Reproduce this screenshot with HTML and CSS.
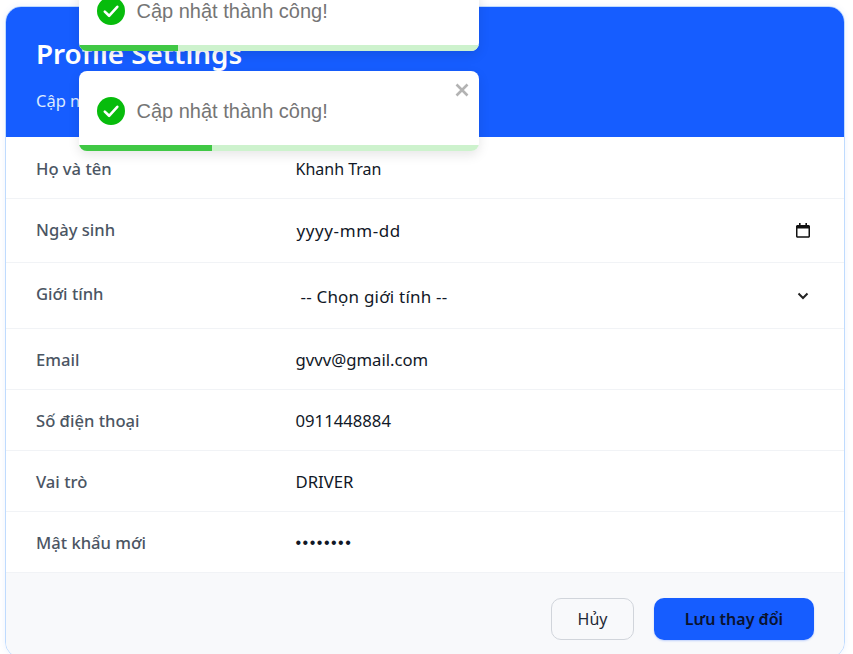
FILE: index.html
```html
<!DOCTYPE html>
<html lang="vi">
<head>
<meta charset="utf-8">
<title>Profile Settings</title>
<link rel="stylesheet" href="styles.css">
</head>
<body>
<main class="card">
  <header class="head">
    <h1>Profile Settings</h1>
    <p>Cập nhật thông tin cá nhân của bạn</p>
  </header>
  <div class="row r62"><span class="label">Họ và tên</span><span class="value v-name">Khanh Tran</span></div>
  <div class="row r64"><span class="label">Ngày sinh</span>
    <span class="value date"><span>yyyy-mm-dd</span>
      <svg class="cal" viewBox="0 0 14 15"><path d="M3 0h1.600v2h4.800V0H11v2h1.500c.8 0 1.500.7 1.500 1.500v9.800c0 .8-.7 1.500-1.500 1.500h-11C.7 14.800 0 14.100 0 13.300V3.500C0 2.700.7 2 1.500 2H3zM1.500 5.500v7.800h11V5.500z" fill="#111"/></svg>
    </span></div>
  <div class="row r66"><span class="label">Giới tính</span>
    <span class="value sel"><span>-- Chọn giới tính --</span>
      <svg class="chev" viewBox="0 0 12 8"><path d="M1.500 1.500L6 6l4.500-4.500" fill="none" stroke="#222" stroke-width="2"/></svg>
    </span></div>
  <div class="row r61"><span class="label">Email</span><span class="value v-wide">gvvv@gmail.com</span></div>
  <div class="row r61"><span class="label">Số điện thoại</span><span class="value v-wide">0911448884</span></div>
  <div class="row r61"><span class="label">Vai trò</span><span class="value v-wide">DRIVER</span></div>
  <div class="row r61"><span class="label">Mật khẩu mới</span><span class="value dots">••••••••</span></div>
  <footer class="foot">
    <button class="btn ghost">Hủy</button>
    <button class="btn primary">Lưu thay đổi</button>
  </footer>
</main>
<div class="toasts">
  <div class="toast">
    <div class="toast-body">
      <svg class="check" viewBox="0 0 28 28"><circle cx="14" cy="14" r="14" fill="#07bc0c"/><path d="M7.800 14.600l4.300 4.200 8.200-9" fill="none" stroke="#fff" stroke-width="2.600" stroke-linecap="round" stroke-linejoin="round"/></svg>
      <span>Cập nhật thành công!</span>
    </div>
    <div class="track"><div class="fill" style="width:99px"></div></div>
  </div>
  <div class="toast">
    <svg class="close" viewBox="0 0 14 14"><path d="M1.500 1.500l11 11M12.500 1.500l-11 11" fill="none" stroke="#b3b3b3" stroke-width="2.600"/></svg>
    <div class="toast-body">
      <svg class="check" viewBox="0 0 28 28"><circle cx="14" cy="14" r="14" fill="#07bc0c"/><path d="M7.800 14.600l4.300 4.200 8.200-9" fill="none" stroke="#fff" stroke-width="2.600" stroke-linecap="round" stroke-linejoin="round"/></svg>
      <span>Cập nhật thành công!</span>
    </div>
    <div class="track"><div class="fill" style="width:133px"></div></div>
  </div>
</div>
</body>
</html>
```
FILE: styles.css
```css
* { box-sizing: border-box; }
html, body { margin: 0; height: 654px; overflow: hidden; background: #fff; }
body { padding: 6px 8px 0 5px; font-family: "Noto Sans", "Open Sans", sans-serif; color: #1f2937; position: relative; }
.card {
  width: 840px; height: 652px;
  border: 1px solid #bfdbfe; border-radius: 16px; overflow: hidden;
  background: #fff; box-shadow: 0 0 6px rgba(37,99,235,.08);
  display: flex; flex-direction: column;
}
.head { height: 130px; background: #165dff; color: #fff; padding: 27px 30px 0; flex: none; }
.head h1 { margin: 0; font-size: 27.800px; line-height: 38px; font-weight: 600; }
.head p { margin: 18px 0 0; font-size: 16.500px; line-height: 22px; color: #dbeafe; }
.row { display: flex; align-items: flex-start; padding: 20px 30px 0; border-bottom: 1px solid #f1f3f6; flex: none; line-height: 22px; }
.r62 { height: 62px; padding-top: 21px; }
.r64 { height: 64px; }
.r66 { height: 66px; }
.r61 { height: 61px; }
.label { width: 259.500px; font-size: 16.600px; font-weight: 550; color: #4b5563; flex: none; }
.value { font-size: 16px; color: #111827; flex: 1; }
.v-wide { font-size: 16.700px; }
.date, .sel { display: flex; justify-content: space-between; padding-right: 4px; }
.date { align-items: center; height: 22px; }
.date span { font-size: 17px; letter-spacing: .6px; margin: 1px 0 0 1px; }
.sel { padding-top: 3px; }
.sel span { font-size: 17px; letter-spacing: .2px; margin-left: 5px; }
.cal { width: 14px; height: 15px; }
.chev { width: 12px; height: 8px; margin: 6px 1px 0 0; }
.dots { font-family: "Liberation Sans", sans-serif; letter-spacing: 1.500px; }
.foot { flex: 1; background: #f8f9fb; display: flex; justify-content: flex-end; align-items: flex-start; gap: 20px; padding: 25px 30px 0 0; }
.btn { height: 42px; border-radius: 10px; font: 16px "Noto Sans", "Open Sans", sans-serif; color: #1f2937; }
.ghost { width: 83px; background: #f8f9fb; border: 1px solid #d1d5db; }
.primary { width: 160px; background: #165dff; border: 0; font-weight: 600; color: #0a1330; box-shadow: 0 1px 2px rgba(22,93,255,.25); }
.toasts { position: absolute; left: 79px; top: -29px; width: 400px; display: flex; flex-direction: column; gap: 20px; z-index: 5; }
.toast { position: relative; height: 80px; background: #fff; border-radius: 8px; overflow: hidden; box-shadow: 0 4px 12px rgba(0,0,0,.1); font-family: "Liberation Sans", Arial, sans-serif; }
.toast-body { height: 80px; display: flex; align-items: center; gap: 11.500px; padding: 0 18px; font-size: 20px; color: #757575; }
.check { width: 28px; height: 28px; flex: none; }
.track { position: absolute; left: 0; right: 0; bottom: 0; height: 6px; background: #cdf2cd; }
.fill { height: 6px; background: #40c845; }
.close { position: absolute; top: 12px; right: 10px; width: 14px; height: 14px; }
```
